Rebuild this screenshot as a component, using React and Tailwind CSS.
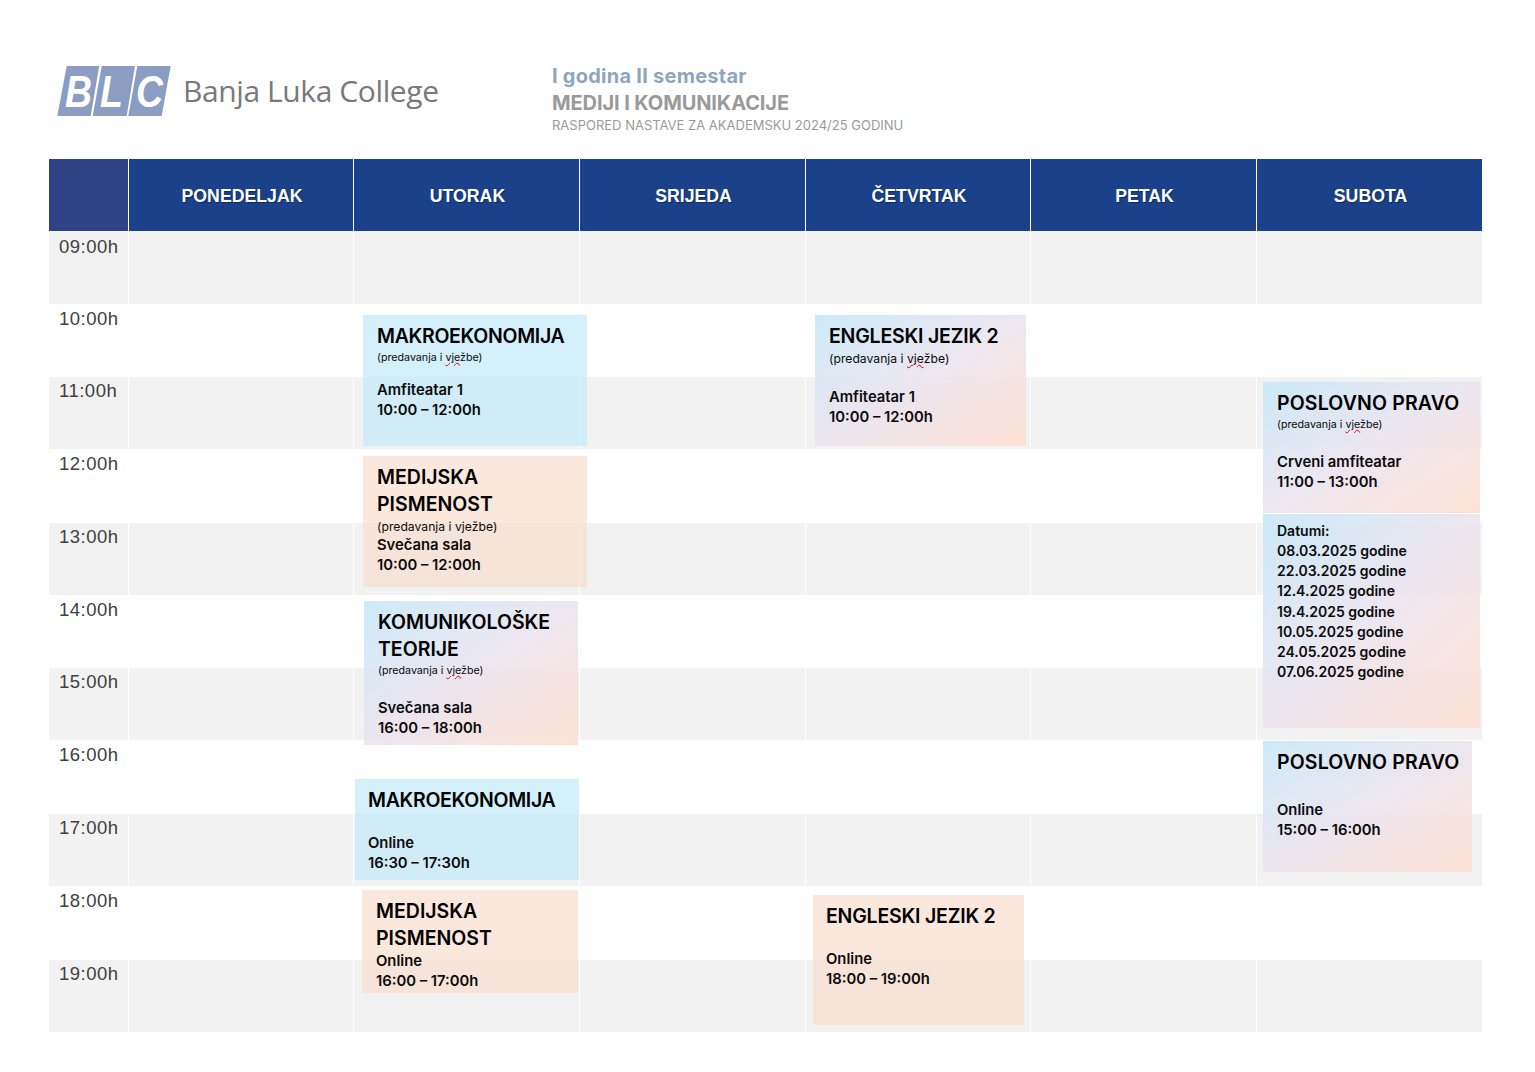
const days = ['PONEDELJAK', 'UTORAK', 'SRIJEDA', 'ČETVRTAK', 'PETAK', 'SUBOTA'];

const rows = [
  { time: '09:00h', height: 'h-[73px]', gray: true, pad: 'pt-[4px]' },
  { time: '10:00h', height: 'h-[73px]', gray: false, pad: 'pt-[3px]' },
  { time: '11:00h', height: 'h-[72px]', gray: true, pad: 'pt-[2px]' },
  { time: '12:00h', height: 'h-[74px]', gray: false, pad: 'pt-[3px]' },
  { time: '13:00h', height: 'h-[72px]', gray: true, pad: 'pt-[2px]' },
  { time: '14:00h', height: 'h-[73px]', gray: false, pad: 'pt-[3px]' },
  { time: '15:00h', height: 'h-[72px]', gray: true, pad: 'pt-[2px]' },
  { time: '16:00h', height: 'h-[74px]', gray: false, pad: 'pt-[3px]' },
  { time: '17:00h', height: 'h-[72px]', gray: true, pad: 'pt-[2px]' },
  { time: '18:00h', height: 'h-[74px]', gray: false, pad: 'pt-[3px]' },
  { time: '19:00h', height: 'h-[72px]', gray: true, pad: 'pt-[2px]' },
];

const colWidths = ['w-[225px]', 'w-[226px]', 'w-[226px]', 'w-[225px]', 'w-[226px]', 'w-[226px]'];

const blue = 'bg-[#c2eaf9]/70';
const peach = 'bg-[#f9dece]/70';
const mixed = 'bg-linear-to-br from-[#c6e8f8]/90 via-[#ebe4ee]/90 to-[#fddfd0]/90';

// small note under the title, only "vje" gets the spellcheck squiggle
function Sub({ size, wavy }) {
  return (
    <div className={`${size} font-normal`}>
      (predavanja i{' '}
      <span className={wavy ? 'underline decoration-wavy decoration-[#e00000] decoration-1 underline-offset-1' : ''}>vje</span>
      žbe)
    </div>
  );
}

const smallSub = 'text-[10.7px] leading-[18px] -mt-[1px]';
const bigSub = 'text-[12.2px] leading-[18px] mt-0';

function Card({ pos, bg, title, track = '', sub, wavy, gap, lines, pl = 'pl-[14px]', pt = 'pt-[8px]', body = 'text-[14.8px] leading-[20px]' }) {
  return (
    <div className={`absolute ${pos} ${bg} ${pl} ${pt} pr-2 text-[#0b0b0b]`}>
      {title && (
        <div className={`text-[19.5px] leading-[27px] font-semibold text-black whitespace-pre-line ${track}`}>{title}</div>
      )}
      {sub && <Sub size={sub} wavy={wavy} />}
      <div className={`${gap} ${body} font-semibold`}>
        {lines.map((l) => (
          <div key={l}>{l}</div>
        ))}
      </div>
    </div>
  );
}

function Logo() {
  return (
    <svg width="114" height="50" viewBox="0 0 114 50" className="shrink-0">
      <polygon points="9.7,0 42.3,0 33.7,50 0.3,50" fill="#8b9dc3" />
      <polygon points="44.7,0 78,0 69.7,50 35.7,50" fill="#8b9dc3" />
      <polygon points="80.3,0 113.7,0 104.7,50 71.3,50" fill="#8b9dc3" />
      <g fill="#fff" fontFamily="'Liberation Sans', sans-serif" fontWeight="700" fontStyle="italic" fontSize="44">
        <text transform="translate(8 41) scale(0.85 1)">B</text>
        <text transform="translate(43 41) scale(0.85 1)">L</text>
        <text transform="translate(79 41) scale(0.85 1)">C</text>
      </g>
    </svg>
  );
}

export default function App() {
  return (
    <div className="w-[1535px] h-[1072px] bg-white pl-[49px] pt-[65px] font-['Inter',sans-serif]">
      <div className="flex h-[94px] items-start">
        <div className="flex w-[503px] items-center pl-[8px] pt-[1px]">
          <Logo />
          <span className="ml-[12px] text-[30px] leading-[50px] text-[#77797b] font-['Open_Sans',sans-serif] tracking-[-0.4px]">
            Banja Luka College
          </span>
        </div>
        <div>
          <div className="text-[20px] leading-[22px] font-bold text-[#8ea6bd] tracking-[0.25px]">I godina II semestar</div>
          <div className="mt-[5px] text-[20px] leading-[22px] font-bold text-[#9a9a9a] tracking-[-0.1px]">
            MEDIJI I KOMUNIKACIJE
          </div>
          <div className="text-[13px] leading-[22px] text-[#9a9a9a]">
            RASPORED NASTAVE ZA AKADEMSKU 2024/25 GODINU
          </div>
        </div>
      </div>

      <div className="relative w-[1433px]">
        <div className="flex h-[72px] bg-[#1a418a] font-['Liberation_Sans',sans-serif]">
          <div className="w-[79px] bg-[#2f4285]" />
          {days.map((d, i) => (
            <div
              key={d}
              className={`${colWidths[i]} flex items-center justify-center border-l border-white pt-[2px] pl-[2px] text-[17.7px] font-bold text-white [text-shadow:1px_1px_1px_rgba(0,0,0,0.35)]`}
            >
              {d}
            </div>
          ))}
        </div>

        {rows.map((r) => (
          <div key={r.time} className={`flex ${r.height} ${r.gray ? 'bg-[#f2f2f2]' : 'bg-white'}`}>
            <div className={`w-[79px] pl-[10px] ${r.pad} text-[18.5px] leading-[24px] tracking-[0.5px] text-[#404040] font-['Liberation_Sans',sans-serif]`}>
              {r.time}
            </div>
            {colWidths.map((w, i) => (
              <div key={i} className={`${w} border-l border-white`} />
            ))}
          </div>
        ))}

        <Card
          pos="left-[314px] top-[156px] w-[224px] h-[131px]"
          bg={blue}
          title="MAKROEKONOMIJA"
          track="tracking-[-0.3px]"
          sub={smallSub}
          wavy
          gap="mt-[13px]"
          lines={['Amfiteatar 1', '10:00 – 12:00h']}
        />
        <Card
          pos="left-[314px] top-[297px] w-[224px] h-[131px]"
          bg={peach}
          title={'MEDIJSKA\nPISMENOST'}
          sub={bigSub}
          gap="-mt-[1px]"
          lines={['Svečana sala', '10:00 – 12:00h']}
        />
        <Card
          pos="left-[315px] top-[442px] w-[214px] h-[144px]"
          bg={mixed}
          title={'KOMUNIKOLOŠKE\nTEORIJE'}
          sub={smallSub}
          wavy
          gap="mt-[18px]"
          lines={['Svečana sala', '16:00 – 18:00h']}
        />
        <Card
          pos="left-[306px] top-[620px] w-[224px] h-[101px]"
          bg={blue}
          pl="pl-[13px]"
          title="MAKROEKONOMIJA"
          track="tracking-[-0.3px]"
          gap="mt-[19px]"
          lines={['Online', '16:30 – 17:30h']}
        />
        <Card
          pos="left-[313px] top-[731px] w-[216px] h-[103px]"
          bg={peach}
          title={'MEDIJSKA\nPISMENOST'}
          gap="-mt-[1px]"
          lines={['Online', '16:00 – 17:00h']}
        />
        <Card
          pos="left-[766px] top-[156px] w-[211px] h-[131px]"
          bg={mixed}
          title="ENGLESKI JEZIK 2"
          track="tracking-[-0.2px]"
          sub={bigSub}
          wavy
          gap="mt-[19px]"
          lines={['Amfiteatar 1', '10:00 – 12:00h']}
        />
        <Card
          pos="left-[764px] top-[736px] w-[211px] h-[130px]"
          bg={peach}
          pl="pl-[13px]"
          title="ENGLESKI JEZIK 2"
          track="tracking-[-0.2px]"
          gap="mt-[19px]"
          lines={['Online', '18:00 – 19:00h']}
        />
        <Card
          pos="left-[1214px] top-[223px] w-[217px] h-[131px]"
          bg={mixed}
          title="POSLOVNO PRAVO"
          track="tracking-[0.15px]"
          sub={smallSub}
          wavy
          gap="mt-[18px]"
          lines={['Crveni amfiteatar', '11:00 – 13:00h']}
        />
        <Card
          pos="left-[1214px] top-[355px] w-[217px] h-[214px]"
          bg={mixed}
          pt="pt-[7px]"
          gap="mt-0"
          body="text-[14px] leading-[20.15px]"
          lines={[
            'Datumi:',
            '08.03.2025 godine',
            '22.03.2025 godine',
            '12.4.2025 godine',
            '19.4.2025 godine',
            '10.05.2025 godine',
            '24.05.2025 godine',
            '07.06.2025 godine',
          ]}
        />
        <Card
          pos="left-[1214px] top-[582px] w-[209px] h-[131px]"
          bg={mixed}
          title="POSLOVNO PRAVO"
          track="tracking-[0.15px]"
          gap="mt-[24px]"
          lines={['Online', '15:00 – 16:00h']}
        />
      </div>
    </div>
  );
}
